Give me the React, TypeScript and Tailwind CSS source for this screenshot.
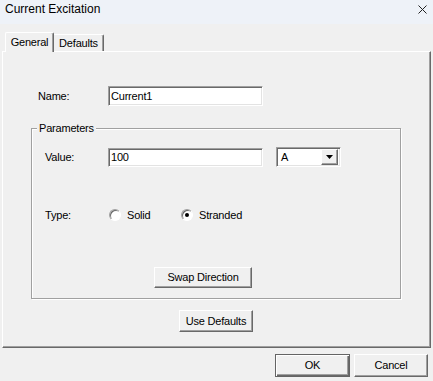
const BODY = "font-['Liberation_Sans',Arial,sans-serif] text-[11px] leading-[13px] tracking-[-0.2px]";

const RAISED =
  "p-0 whitespace-nowrap bg-[#f0f0f0] border border-t-white border-l-white border-r-[#696969] border-b-[#696969] shadow-[inset_-1px_-1px_0_#a0a0a0]";

const SUNKEN =
  "bg-white border border-t-[#a0a0a0] border-l-[#a0a0a0] border-r-white border-b-white shadow-[inset_1px_1px_0_#696969,inset_-1px_-1px_0_#e3e3e3]";

function Radio({ checked, label, width }: { checked?: boolean; label: string; width: string }) {
  return (
    <div className={`flex items-center ${width}`}>
      <div className="w-[12px] h-[12px] rounded-full bg-white border border-t-[#a0a0a0] border-l-[#a0a0a0] border-r-white border-b-white shadow-[inset_1px_1px_0_#696969] flex items-center justify-center">
        {checked && <div className="w-[4px] h-[4px] rounded-full bg-black" />}
      </div>
      <span className="ml-[6px]">{label}</span>
    </div>
  );
}

export default function App() {
  return (
    <div className={`w-[433px] h-[381px] bg-[#f0f0f0] text-black overflow-hidden ${BODY}`}>
      {/* title bar */}
      <div className="h-[24px] bg-[#eef2f8] flex items-start justify-between pl-[5px] pr-[6px] pt-[2px]">
        <span className="text-[12px] leading-[15px] tracking-normal">Current Excitation</span>
        <svg width="9" height="9" viewBox="0 0 9 9" className="mt-[3px]">
          <path d="M0.5 0.5 L8.5 8.5 M8.5 0.5 L0.5 8.5" stroke="#222" strokeWidth="1" fill="none" />
        </svg>
      </div>

      {/* tabs */}
      <div className="h-[27px] flex items-end pl-[5px]">
        <div className="relative z-10 -mb-[1px] h-[20px] w-[49px] bg-[#f0f0f0] rounded-t-[2px] border-t border-l border-r border-t-white border-l-white border-r-[#696969] shadow-[inset_-1px_0_0_#a0a0a0] flex items-center justify-center pb-[1px]">
          General
        </div>
        <div className="h-[17px] w-[50px] rounded-tr-[2px] border-t border-r border-t-white border-r-[#696969] shadow-[inset_-1px_0_0_#a0a0a0] flex items-center justify-center">
          Defaults
        </div>
      </div>

      {/* panel */}
      <div className="ml-[2px] w-[429px] h-[297px] border border-t-white border-l-white border-r-[#696969] border-b-[#696969] shadow-[inset_-1px_-1px_0_#a0a0a0] flex flex-col">
        <div className="mt-[34px] pl-[35px] flex items-center">
          <span className="w-[70px]">Name:</span>
          <div className={`w-[155px] h-[20px] ${SUNKEN} pl-[2px] flex items-center`}>Current1</div>
        </div>

        {/* Parameters group */}
        <div className="relative mt-[22px] ml-[28px] w-[370px] h-[171px] border border-[#a0a0a0] shadow-[1px_1px_0_#fff,inset_1px_1px_0_#fff] flex flex-col">
          <span className="absolute -top-[7px] left-[5px] px-[2px] bg-[#f0f0f0]">Parameters</span>

          <div className="mt-[18px] pl-[13px] flex items-center h-[20px]">
            <span className="w-[63px]">Value:</span>
            <div className={`w-[155px] h-[19px] ${SUNKEN} pl-[2px] flex items-center`}>100</div>
            <div className={`ml-[13px] w-[65px] h-[20px] ${SUNKEN} flex items-center justify-between p-[2px]`}>
              <span className="pl-[2px]">A</span>
              <div className={`w-[17px] h-[16px] ${RAISED} flex items-center justify-center`}>
                <svg width="7" height="4" viewBox="0 0 7 4">
                  <path d="M0 0 H7 L3.5 4 Z" fill="#000" />
                </svg>
              </div>
            </div>
          </div>

          <div className="mt-[38px] pl-[13px] flex items-center h-[20px]">
            <span className="w-[64px]">Type:</span>
            <Radio label="Solid" width="w-[72px]" />
            <Radio label="Stranded" checked width="w-[90px]" />
          </div>

          <div className="mt-[42px] ml-[122px]">
            <button className={`w-[98px] h-[21px] ${RAISED}`}>Swap Direction</button>
          </div>
        </div>

        <div className="mt-[11px] ml-[176px]">
          <button className={`w-[74px] h-[22px] ${RAISED}`}>Use Defaults</button>
        </div>
      </div>

      {/* dialog buttons */}
      <div className="mt-[6px] flex justify-end gap-[4px] pr-[5px]">
        <button className="p-0 w-[75px] h-[23px] bg-[#f0f0f0] border border-[#646464] shadow-[inset_1px_1px_0_#fff,inset_-1px_-1px_0_#696969,inset_-2px_-2px_0_#a0a0a0]">
          OK
        </button>
        <button className={`w-[74px] h-[23px] ${RAISED}`}>Cancel</button>
      </div>
    </div>
  );
}
